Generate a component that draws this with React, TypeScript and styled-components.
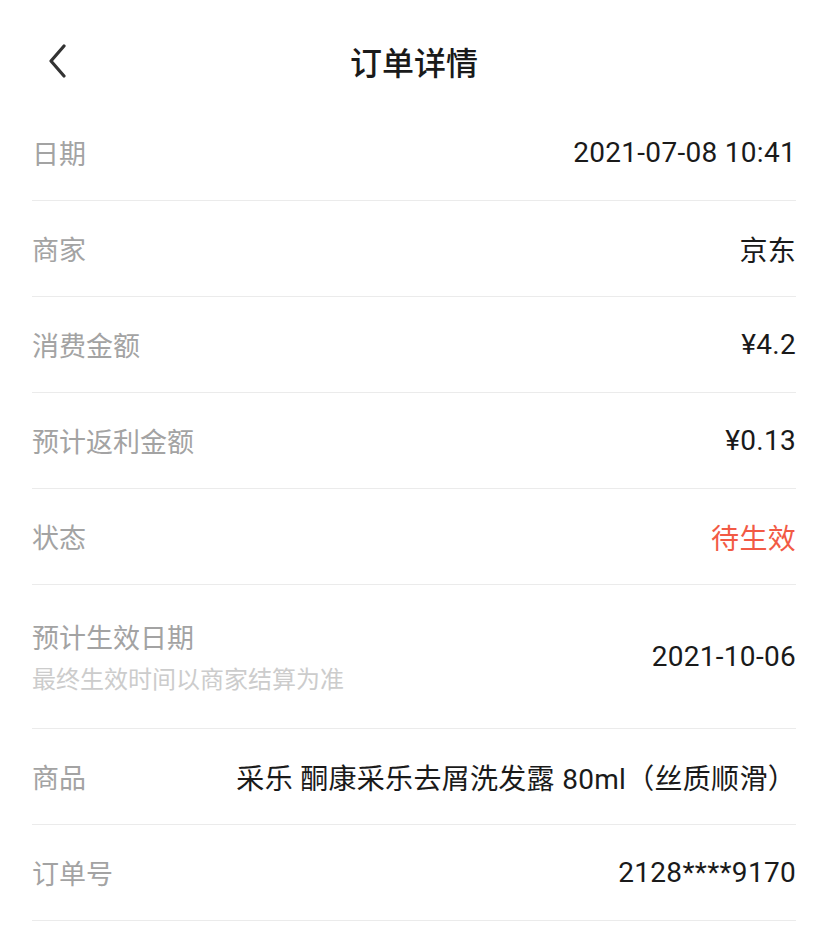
import styled, { createGlobalStyle } from "styled-components";

const GlobalStyle = createGlobalStyle`
  html, body {
    margin: 0;
    padding: 0;
    background: #ffffff;
  }
  body {
    font-family: Roboto, "Noto Sans CJK SC", sans-serif;
    -webkit-font-smoothing: antialiased;
  }
`;

const Page = styled.div`
  width: 828px;
  min-height: 934px;
  background: #ffffff;
`;

const Header = styled.header`
  height: 105px;
  padding-top: 16px;
  box-sizing: border-box;
  display: grid;
  grid-template-columns: 120px 1fr 120px;
  align-items: center;
`;

const BackButton = styled.button`
  justify-self: start;
  margin-left: 43px;
  width: 30px;
  height: 40px;
  padding: 0;
  border: none;
  background: none;
  display: flex;
  align-items: center;
  justify-content: center;
`;

const Title = styled.h1`
  margin: 0;
  text-align: center;
  font-size: 32px;
  font-weight: 500;
  color: #1a1a1a;
  font-family: "Noto Sans CJK SC", sans-serif;
`;

const List = styled.div`
  margin: 0 32px;
`;

const Row = styled.div<{ $tall?: boolean }>`
  height: ${(p) => (p.$tall ? 143 : 95)}px;
  border-bottom: 1px solid #ebebeb;
  display: flex;
  align-items: center;
  justify-content: space-between;
  gap: 24px;
`;

const LabelBox = styled.div`
  display: flex;
  flex-direction: column;
  gap: 8px;
  flex-shrink: 0;
`;

const Label = styled.span`
  font-size: 27px;
  color: #a3a3a3;
  font-family: "Noto Sans CJK SC", sans-serif;
  line-height: 1.3;
`;

const Hint = styled.span`
  font-size: 24px;
  color: #cccccc;
  font-family: "Noto Sans CJK SC", sans-serif;
  line-height: 1.3;
`;

const Value = styled.span<{ $accent?: boolean }>`
  font-size: 28px;
  font-weight: 400;
  letter-spacing: 0.3px;
  color: ${(p) => (p.$accent ? "#f25a45" : "#1a1a1a")};
  text-align: right;
  white-space: nowrap;
`;

type Item = {
  label: string;
  hint?: string;
  value: string;
  accent?: boolean;
};

const items: Item[] = [
  { label: "日期", value: "2021-07-08 10:41" },
  { label: "商家", value: "京东" },
  { label: "消费金额", value: "¥4.2" },
  { label: "预计返利金额", value: "¥0.13" },
  { label: "状态", value: "待生效", accent: true },
  { label: "预计生效日期", hint: "最终生效时间以商家结算为准", value: "2021-10-06" },
  { label: "商品", value: "采乐 酮康采乐去屑洗发露 80ml（丝质顺滑）" },
  { label: "订单号", value: "2128****9170" },
];

const App: React.FC = () => {
  return (
    <Page>
      <GlobalStyle />
      <Header>
        <BackButton aria-label="返回">
          <svg width="20" height="34" viewBox="0 0 20 34" fill="none">
            <path
              d="M16 2 L3 17 L16 32"
              stroke="#333333"
              strokeWidth="3.2"
              strokeLinecap="round"
              strokeLinejoin="round"
            />
          </svg>
        </BackButton>
        <Title>订单详情</Title>
        <div />
      </Header>
      <List>
        {items.map((it) => (
          <Row key={it.label} $tall={!!it.hint}>
            <LabelBox>
              <Label>{it.label}</Label>
              {it.hint && <Hint>{it.hint}</Hint>}
            </LabelBox>
            <Value $accent={it.accent}>{it.value}</Value>
          </Row>
        ))}
      </List>
    </Page>
  );
};

export default App;
